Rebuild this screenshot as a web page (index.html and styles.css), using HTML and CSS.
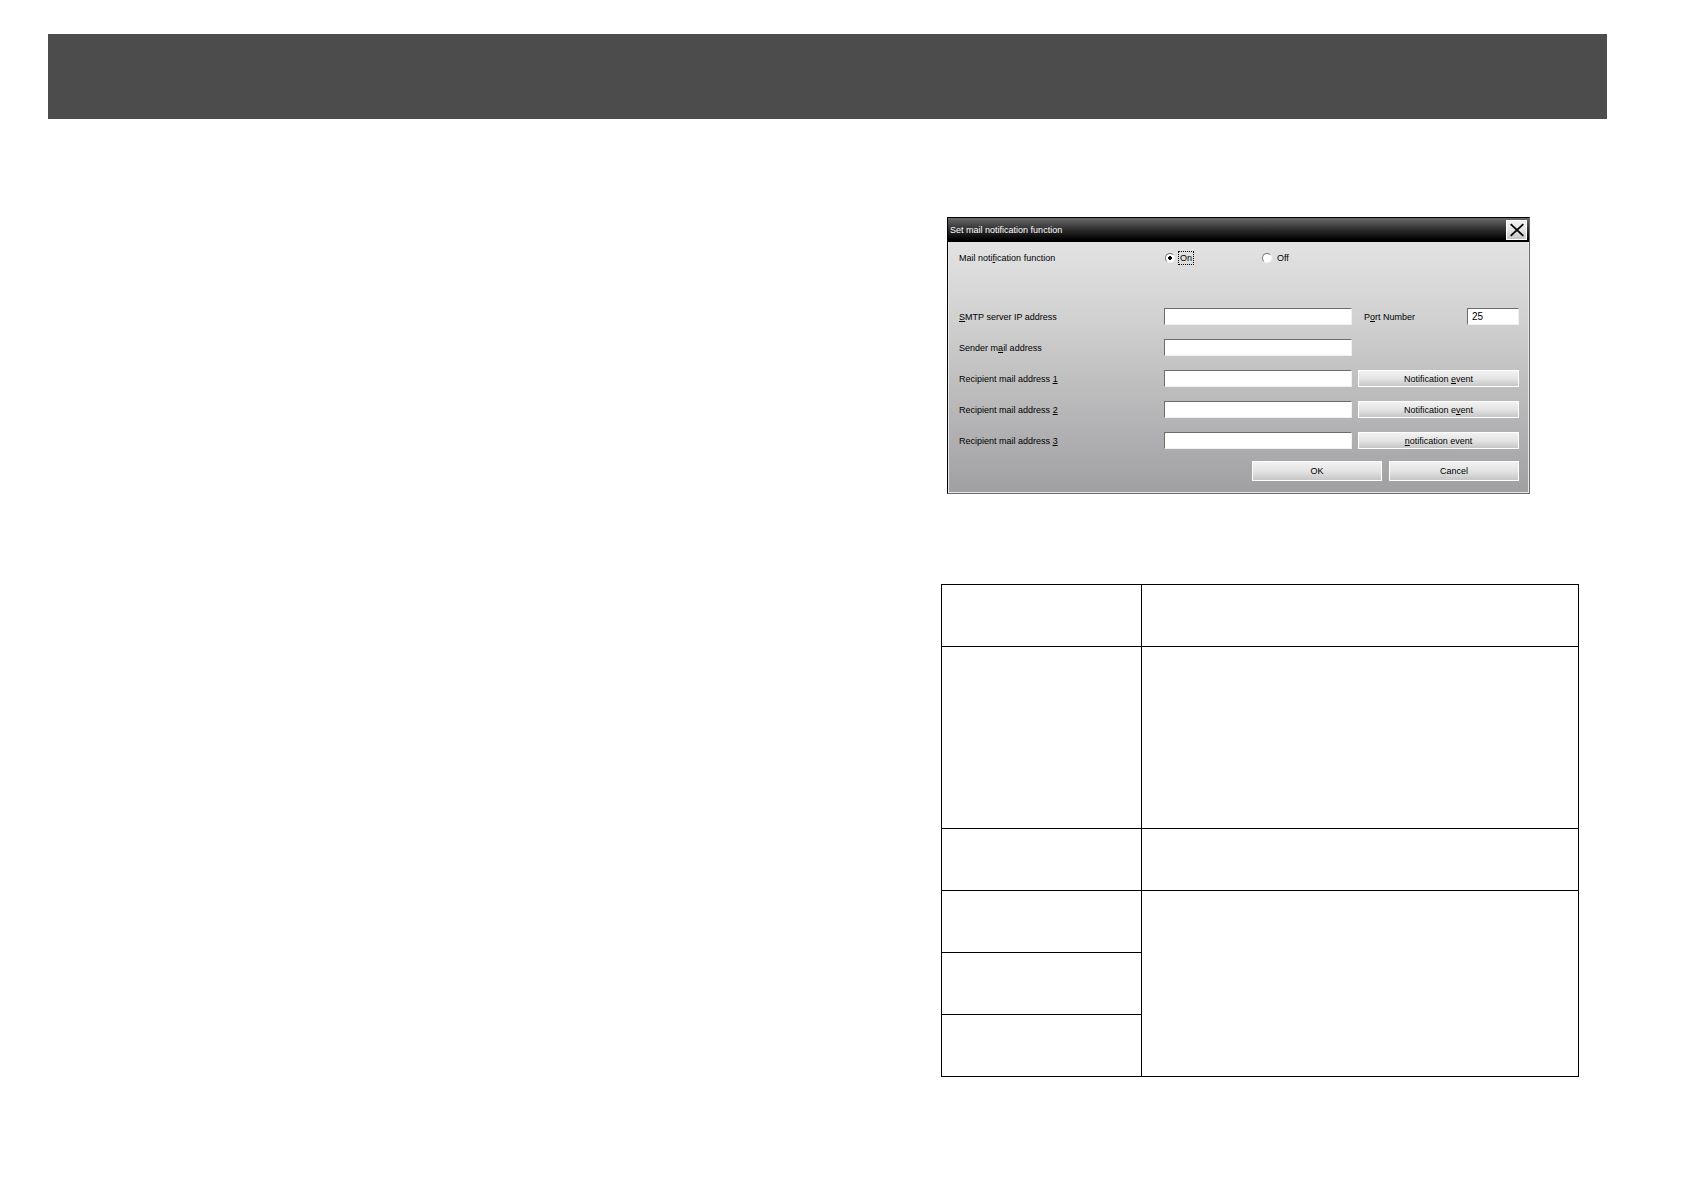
FILE: index.html
```html
<!DOCTYPE html>
<html lang="en">
<head>
  <meta charset="UTF-8">
  <meta name="viewport" content="width=device-width, initial-scale=1.0">
  <title>Set mail notification function</title>
  <link rel="stylesheet" href="styles.css">
</head>
<body>
  <header class="banner"></header>

  <main class="page">
    <section class="column">
      <form class="dialog">
        <div class="title-bar">
          <span>Set mail notification function</span>
          <button type="button" class="close" aria-label="Close">
            <svg viewBox="0 0 20 20" width="18" height="18">
              <path d="M3 3.5 L17 16.5 M17 3.5 L3 16.5" fill="none" stroke="#000" stroke-width="2"/>
            </svg>
          </button>
        </div>

        <div class="fields">
          <span class="mode-label" id="mode">Mail noti<u>f</u>ication function</span>
          <div class="modes" role="radiogroup" aria-labelledby="mode">
            <label><input type="radio" name="mode" checked><span class="focused">On</span></label>
            <label><input type="radio" name="mode"><span>Off</span></label>
          </div>

          <label for="smtp"><u>S</u>MTP server IP address</label>
          <input type="text" id="smtp">
          <div class="port">
            <label for="port">P<u>o</u>rt Number</label>
            <input type="text" id="port" value="25">
          </div>

          <label for="sender">Sender m<u>a</u>il address</label>
          <input type="text" id="sender">
          <span></span>

          <label for="rcpt1">Recipient mail address <u>1</u></label>
          <input type="text" id="rcpt1">
          <button type="button">Notification <u>e</u>vent</button>

          <label for="rcpt2">Recipient mail address <u>2</u></label>
          <input type="text" id="rcpt2">
          <button type="button">Notification e<u>v</u>ent</button>

          <label for="rcpt3">Recipient mail address <u>3</u></label>
          <input type="text" id="rcpt3">
          <button type="button"><u>n</u>otification event</button>
        </div>

        <div class="actions">
          <button type="button">OK</button>
          <button type="button">Cancel</button>
        </div>
      </form>

      <table class="items">
        <tr><td class="name"></td><td></td></tr>
        <tr class="tall"><td></td><td></td></tr>
        <tr><td></td><td></td></tr>
        <tr><td></td><td rowspan="3"></td></tr>
        <tr><td></td></tr>
        <tr><td></td></tr>
      </table>
    </section>
  </main>
</body>
</html>
```
FILE: styles.css
```css
* {
  box-sizing: border-box;
}
body {
  margin: 0;
  background-color: #fff;
  color: #000;
  font-family: "Liberation Sans", Arial, sans-serif;
  font-size: 9px;
}
.banner {
  height: 85px;
  margin: 34px 77px 0 48px;
  background-color: #4c4c4c;
}
.page {
  display: grid;
  grid-template-columns: 7fr 5fr;
  padding: 98px 105px 80px 48px;
}
.column {
  grid-column: 2;
}

/* dialog */
.dialog {
  margin: 0 49px 90px 6px;
  border: 1px solid #000;
  border-right-color: #6c6c6c;
  border-bottom-color: #6c6c6c;
  background: linear-gradient(#e8e8e8, #d2d2d2 35%, #a09fa2);
  box-shadow: inset 1px 0 #e8e8e8, inset -1px -1px #e8e8e8;
}
.title-bar {
  display: flex;
  align-items: center;
  justify-content: space-between;
  height: 24px;
  padding: 0 2px;
  background: linear-gradient(#6a6a6a, #2c2c2c 50%, #000 90%);
  color: #fff;
}
.fields {
  display: grid;
  grid-template-columns: 1fr 188px 161px;
  grid-template-rows: 45px;
  grid-auto-rows: 17px;
  gap: 14px 6px;
  padding: 7px 10px 0 11px;
  align-items: center;
}
.mode-label, .modes {
  margin-bottom: 28px;
}
.modes {
  grid-column: span 2;
  display: grid;
  grid-template-columns: 97px 97px;
}
.modes label {
  display: flex;
  align-items: center;
  gap: 3px;
}
.modes span {
  padding: 1px;
  border: 1px solid transparent;
}
.modes .focused {
  border: 1px dotted #000;
}
input[type="radio"] {
  appearance: none;
  width: 10px;
  height: 10px;
  margin: 0 0 0 1px;
  border: 1px solid;
  border-color: #777 #f4f4f4 #f4f4f4 #777;
  border-radius: 50%;
  background-color: #fff;
}
input[type="radio"]:checked {
  background-image: radial-gradient(circle, #000 2px, transparent 2px);
}
input[type="text"] {
  width: 100%;
  height: 17px;
  padding: 0 4px;
  border: 1px solid;
  border-color: #6c6c68 #f0f0f0 #f0f0f0 #6c6c68;
  border-radius: 0;
  background-color: #fff;
  font: inherit;
}
.port {
  display: flex;
  align-items: center;
  justify-content: space-between;
  padding-left: 6px;
}
.port input[type="text"] {
  width: 52px;
  font-size: 10px;
}
button {
  height: 17px;
  padding: 0;
  border: 1px solid #fff;
  background: linear-gradient(#f2f2f2, #e4e4e4 50%, #c6c6c6);
  color: #000;
  font: inherit;
}
.actions {
  display: flex;
  justify-content: flex-end;
  gap: 7px;
  padding: 12px 10px 12px;
}
.actions button {
  width: 130px;
  height: 20px;
}
.close {
  display: flex;
  align-items: center;
  justify-content: center;
  width: 21px;
  height: 20px;
}

/* item table */
.items {
  width: 100%;
  border-collapse: collapse;
}
.items td {
  height: 62px;
  padding: 0;
  border: 1px solid #000;
}
.items .name {
  width: 200px;
}
.items .tall td {
  height: 182px;
}
```
